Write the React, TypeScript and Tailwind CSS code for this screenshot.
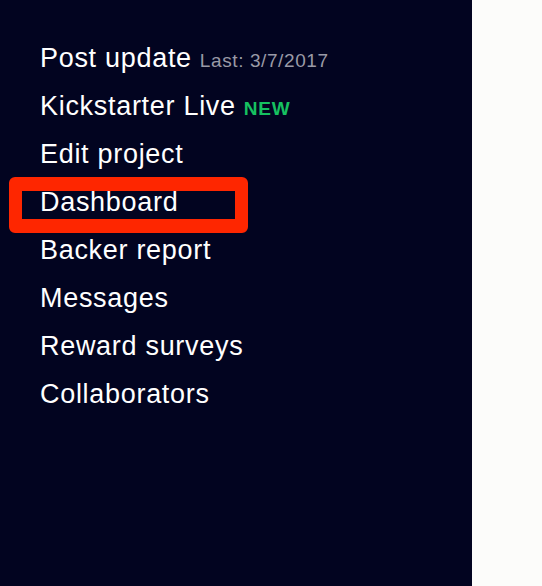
import React from "react";

const items = [
  "Edit project",
  "Dashboard",
  "Backer report",
  "Messages",
  "Reward surveys",
  "Collaborators",
];

export default function App() {
  return (
    <div className="flex w-[542px] h-[586px] bg-[#fcfcfa]" style={{ fontFamily: '"Liberation Sans", Arial, sans-serif' }}>
      <div className="relative w-[472px] h-full bg-[#020420] pt-[34px] pl-[40px]">
        <ul className="flex flex-col text-white text-[27px] leading-[48px] tracking-[0.7px]">
          <li className="h-[48px]">
            Post update
            <span className="ml-[8px] text-[19px] leading-[0] tracking-[0.6px] text-[#9a9aa6]">Last: 3/7/2017</span>
          </li>
          <li className="h-[48px]">
            Kickstarter Live
            <span className="ml-[8px] text-[19px] leading-[0] tracking-[0.8px] font-bold text-[#16c160]">NEW</span>
          </li>
          {items.map((t) => (
            <li key={t} className="h-[48px]">{t}</li>
          ))}
        </ul>
        <div className="absolute left-[9px] top-[177px] w-[239px] h-[56px] border-[13px] border-y-[14px] border-[#fe2600] rounded-[6px]" />
      </div>
      <div className="flex-1" />
    </div>
  );
}
